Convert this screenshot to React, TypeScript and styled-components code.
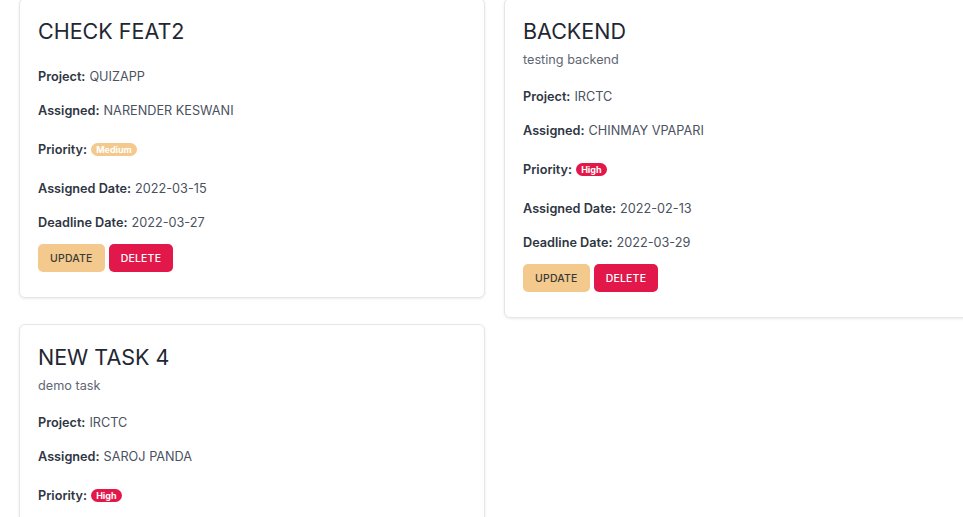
import React from "react";
import styled, { createGlobalStyle } from "styled-components";

const Global = createGlobalStyle`
  html, body { margin: 0; padding: 0; background: #ffffff; overflow: hidden; }
  body { font-family: Inter, "Noto Sans", "Liberation Sans", sans-serif; -webkit-font-smoothing: antialiased; }
  * { box-sizing: border-box; }
`;

const Board = styled.div`
  display: flex;
  align-items: flex-start;
  gap: 19px;
  padding-left: 19px;
  margin-top: -2px;
  width: 1100px;
`;

const Column = styled.div`
  display: flex;
  flex-direction: column;
  gap: 26px;
  width: 466px;
  flex: none;
`;

const Card = styled.div`
  background: #fff;
  border: 1px solid #e6e6e6;
  border-radius: 6px;
  box-shadow: 0 1px 3px rgba(0, 0, 0, 0.08);
  padding: 16px 18px 25px;
`;

const Title = styled.h2`
  margin: 0 0 3px;
  font-size: 21.5px;
  line-height: 32px;
  font-weight: 400;
  color: #1f2733;
`;

const Description = styled.p`
  margin: 0;
  font-size: 12.7px;
  line-height: 20px;
  color: #5f6673;
`;

const Details = styled.div<{ $afterDesc: boolean }>`
  display: flex;
  flex-direction: column;
  gap: 14px;
  margin-top: ${(p) => (p.$afterDesc ? "16px" : "19px")};
`;

const Row = styled.div<{ $tall?: boolean }>`
  display: flex;
  align-items: center;
  height: ${(p) => (p.$tall ? "30px" : "20px")};
  font-size: 12.7px;
  color: #4a5160;
`;

const Label = styled.span`
  font-weight: 600;
  color: #2f3643;
  margin-right: 4px;
`;

const Badge = styled.span<{ $bg: string }>`
  display: inline-flex;
  align-items: center;
  height: 13px;
  padding: 0 5px;
  border-radius: 7px;
  background: ${(p) => p.$bg};
  color: #fff;
  font-size: 9px;
  font-weight: 700;
`;

const Actions = styled.div`
  display: flex;
  gap: 4px;
  margin-top: 12px;
`;

const Button = styled.button<{ $bg: string; $fg: string }>`
  height: 28px;
  padding: 0 12px;
  border: none;
  border-radius: 5px;
  background: ${(p) => p.$bg};
  color: ${(p) => p.$fg};
  font-family: inherit;
  font-size: 10.5px;
  font-weight: 500;
  letter-spacing: 0.2px;
  text-transform: uppercase;
`;

type Task = {
  title: string;
  desc?: string;
  project: string;
  assigned: string;
  priority: "Medium" | "High";
  assignedDate?: string;
  deadline?: string;
};

const priorityColor = { Medium: "#f3c98e", High: "#e3184a" };

const TaskCard = ({ t }: { t: Task }) => (
  <Card>
    <Title>{t.title}</Title>
    {t.desc && <Description>{t.desc}</Description>}
    <Details $afterDesc={!!t.desc}>
      <Row>
        <Label>Project:</Label>
        {t.project}
      </Row>
      <Row>
        <Label>Assigned:</Label>
        {t.assigned}
      </Row>
      <Row $tall>
        <Label>Priority:</Label>
        <Badge $bg={priorityColor[t.priority]}>{t.priority}</Badge>
      </Row>
      {t.assignedDate && (
        <Row>
          <Label>Assigned Date:</Label>
          {t.assignedDate}
        </Row>
      )}
      {t.deadline && (
        <Row>
          <Label>Deadline Date:</Label>
          {t.deadline}
        </Row>
      )}
    </Details>
    {t.deadline && (
      <Actions>
        <Button $bg="#f3c98e" $fg="#3b3a36">Update</Button>
        <Button $bg="#e3184a" $fg="#ffffff">Delete</Button>
      </Actions>
    )}
  </Card>
);

export default function App() {
  return (
    <>
      <Global />
      <Board>
        <Column>
          <TaskCard
            t={{
              title: "CHECK FEAT2",
              project: "QUIZAPP",
              assigned: "NARENDER KESWANI",
              priority: "Medium",
              assignedDate: "2022-03-15",
              deadline: "2022-03-27",
            }}
          />
          <TaskCard
            t={{
              title: "NEW TASK 4",
              desc: "demo task",
              project: "IRCTC",
              assigned: "SAROJ PANDA",
              priority: "High",
              assignedDate: "2022-03-20",
              deadline: "2022-03-30",
            }}
          />
        </Column>
        <Column>
          <TaskCard
            t={{
              title: "BACKEND",
              desc: "testing backend",
              project: "IRCTC",
              assigned: "CHINMAY VPAPARI",
              priority: "High",
              assignedDate: "2022-02-13",
              deadline: "2022-03-29",
            }}
          />
        </Column>
      </Board>
    </>
  );
}
